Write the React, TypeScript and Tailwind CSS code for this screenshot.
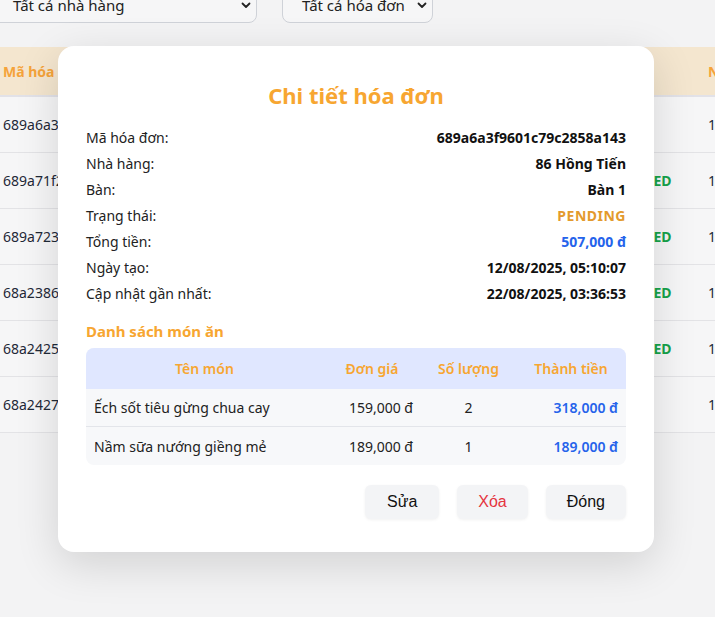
import React from "react";

const font = { fontFamily: '"Noto Sans", "Segoe UI", sans-serif' };

function ChevronDown() {
  return (
    <svg width="12" height="12" viewBox="0 0 12 12" fill="none">
      <path d="M2.5 4.5L6 8L9.5 4.5" stroke="#222" strokeWidth="1.8" strokeLinecap="round" strokeLinejoin="round" />
    </svg>
  );
}

const bgRows = [
  { id: "689a6a3f9601", status: "PENDING", color: "text-[#e0952a]" },
  { id: "689a71f2b811", status: "COMPLETED", color: "text-[#16a34a]" },
  { id: "689a7236c0aa", status: "COMPLETED", color: "text-[#16a34a]" },
  { id: "68a2386e1f02", status: "COMPLETED", color: "text-[#16a34a]" },
  { id: "68a2425b7c13", status: "COMPLETED", color: "text-[#16a34a]" },
  { id: "68a2427d9e44", status: "PENDING", color: "text-[#e0952a]" },
];

const info: { label: string; value: string; cls: string }[] = [
  { label: "Mã hóa đơn:", value: "689a6a3f9601c79c2858a143", cls: "text-[#111]" },
  { label: "Nhà hàng:", value: "86 Hồng Tiến", cls: "text-[#111]" },
  { label: "Bàn:", value: "Bàn 1", cls: "text-[#111]" },
  { label: "Trạng thái:", value: "PENDING", cls: "text-[#e39a2d] tracking-[0.5px]" },
  { label: "Tổng tiền:", value: "507,000 đ", cls: "text-[#2563eb]" },
  { label: "Ngày tạo:", value: "12/08/2025, 05:10:07", cls: "text-[#111]" },
  { label: "Cập nhật gần nhất:", value: "22/08/2025, 03:36:53", cls: "text-[#111]" },
];

const items = [
  { name: "Ếch sốt tiêu gừng chua cay", price: "159,000 đ", qty: "2", total: "318,000 đ" },
  { name: "Nầm sữa nướng giềng mẻ", price: "189,000 đ", qty: "1", total: "189,000 đ" },
];

export default function App() {
  return (
    <div className="relative w-[715px] h-[617px] overflow-hidden bg-[#f3f3f4]" style={font}>
      {/* Background page */}
      <div className="flex flex-col">
        <div className="flex gap-[25px] -mt-[13px] -ml-[10px]">
          <div className="w-[267px] h-[36px] rounded-[8px] border border-[#cfd2d8] bg-[#f6f6f7] flex items-center justify-between pl-[22px] pr-[4px] text-[15px] text-[#222]">
            <span>Tất cả nhà hàng</span>
            <ChevronDown />
          </div>
          <div className="w-[151px] h-[36px] rounded-[8px] border border-[#cfd2d8] bg-[#f6f6f7] flex items-center justify-between pl-[19px] pr-[4px] text-[15px] text-[#222]">
            <span>Tất cả hóa đơn</span>
            <ChevronDown />
          </div>
        </div>
        <div className="mt-[24px] -ml-[10px] w-[800px]">
          <div className="h-[50px] bg-[#f4e6cf] rounded-tl-[10px] border-b-2 border-[#e2e2e8] flex items-center text-[14px] font-bold text-[#f5a33a] whitespace-nowrap">
            <div className="w-[588px] shrink-0 pl-[13px]">Mã hóa đơn</div>
            <div className="w-[130px] shrink-0">Trạng thái</div>
            <div className="shrink-0">Ngày tạo</div>
          </div>
          {bgRows.map((r) => (
            <div key={r.id} className="h-[56px] bg-[#f6f6f7] border-b border-[#e3e3e6] flex items-center text-[14px] text-[#1f2937] whitespace-nowrap">
              <div className="w-[598px] shrink-0 pl-[13px]">{r.id}</div>
              <div className={`w-[120px] shrink-0 font-bold ${r.color}`}>{r.status}</div>
              <div className="shrink-0">12/08/2025</div>
            </div>
          ))}
        </div>
      </div>

      {/* Modal */}
      <div className="absolute left-[58px] top-[46px] w-[596px] h-[506px] bg-white rounded-[16px] shadow-[0_12px_44px_rgba(0,0,0,0.14)] px-[28px] pt-[34px] flex flex-col">
        <h2 className="text-center text-[22px] leading-[30px] font-bold text-[#f7a631]">Chi tiết hóa đơn</h2>
        <div className="mt-[14px] flex flex-col">
          {info.map((row) => (
            <div key={row.label} className="h-[26px] flex items-center justify-between text-[14px]">
              <span className="text-[#222]">{row.label}</span>
              <span className={`font-bold ${row.cls}`}>{row.value}</span>
            </div>
          ))}
        </div>
        <div className="mt-[14px] h-[22px] flex items-center text-[15px] font-bold text-[#f7a631]">Danh sách món ăn</div>
        <div className="mt-[6px] rounded-[8px] overflow-hidden bg-[#f7f8fa] text-[14px]">
          <div className="grid grid-cols-[237px_98px_95px_110px] h-[41px] items-center bg-[#e0e7ff] font-semibold text-[#f7a631]">
            <div className="text-center">Tên món</div>
            <div className="text-center">Đơn giá</div>
            <div className="text-center">Số lượng</div>
            <div className="text-center">Thành tiền</div>
          </div>
          {items.map((it, i) => (
            <div key={it.name} className={`grid grid-cols-[237px_98px_95px_110px] h-[38px] items-center text-[#222] ${i === 0 ? "border-b border-[#e3e5ea]" : ""}`}>
              <div className="pl-[8px]">{it.name}</div>
              <div className="text-right pr-[8px]">{it.price}</div>
              <div className="text-center">{it.qty}</div>
              <div className="text-right pr-[8px] font-semibold text-[#2563eb]">{it.total}</div>
            </div>
          ))}
        </div>
        <div className="mt-[20px] flex justify-end gap-[18px]" style={{ fontFamily: '"Liberation Sans", Arial, sans-serif' }}>
          <button className="h-[34px] px-[22px] rounded-[6px] bg-[#f3f4f6] shadow-[0_1px_3px_rgba(0,0,0,0.06)] text-[16px] text-[#111]">Sửa</button>
          <button className="h-[34px] px-[21px] rounded-[6px] bg-[#f3f4f6] shadow-[0_1px_3px_rgba(0,0,0,0.06)] text-[16px] text-[#e5343f]">Xóa</button>
          <button className="h-[34px] px-[21px] rounded-[6px] bg-[#f3f4f6] shadow-[0_1px_3px_rgba(0,0,0,0.06)] text-[16px] text-[#111]">Đóng</button>
        </div>
      </div>
    </div>
  );
}
